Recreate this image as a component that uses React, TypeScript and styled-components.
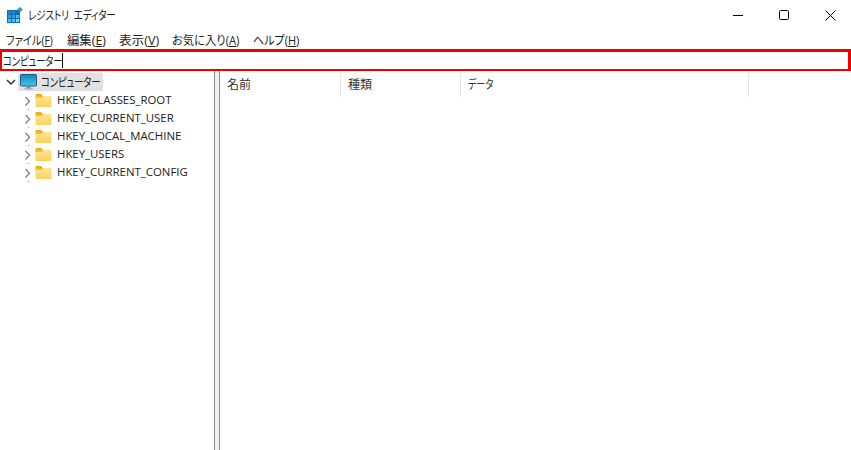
import styled, { createGlobalStyle } from "styled-components";

const GlobalStyle = createGlobalStyle`
  html, body {
    margin: 0;
    padding: 0;
    background: #fff;
  }
`;

const Window = styled.div`
  width: 851px;
  height: 450px;
  overflow: hidden;
  display: flex;
  flex-direction: column;
  background: #fff;
  color: #1a1a1a;
  font-family: "Open Sans", "Noto Sans CJK JP", sans-serif;
  font-size: 12px;
  font-feature-settings: "palt";
`;

// the reference's Japanese UI font has much narrower kana than Noto
const Narrow = styled.span<{ $width: number; $scale: number }>`
  display: inline-block;
  width: ${(p) => p.$width}px;
  white-space: nowrap;
  transform: scaleX(${(p) => p.$scale});
  transform-origin: left center;
`;

const TitleBar = styled.div`
  height: 30px;
  display: flex;
  align-items: center;
  padding-left: 7px;
`;

const TitleText = styled.span`
  margin-left: 5px;
  font-size: 12px;
  color: #222;
  letter-spacing: -0.2px;
  word-spacing: 3px;
`;

const WindowButtons = styled.div`
  margin-left: auto;
  margin-right: -2px;
  display: flex;
`;

const WindowButton = styled.div`
  width: 46px;
  height: 30px;
  display: flex;
  align-items: center;
  justify-content: center;
`;

const MenuBar = styled.div`
  height: 19px;
  display: flex;
  align-items: center;
  gap: 14px;
  padding-left: 6px;
  font-size: 12px;
  color: #222;
`;

const MenuKey = styled.span`
  text-decoration: underline;
`;

const AddressBar = styled.div`
  height: 22px;
  box-sizing: border-box;
  border-style: solid;
  border-color: #f00000;
  border-width: 3px 3px 2px 2px;
  display: flex;
  align-items: center;
  padding-left: 1px;
  font-size: 12px;
  letter-spacing: -0.2px;
`;

const Caret = styled.span`
  width: 1px;
  height: 15px;
  background: #000;
`;

const Panes = styled.div`
  flex: 1;
  display: flex;
  min-height: 0;
`;

const TreePane = styled.div`
  width: 214px;
  flex-shrink: 0;
  padding-top: 2px;
`;

const Splitter = styled.div`
  width: 4px;
  flex-shrink: 0;
  border-left: 1px solid #8c8c8c;
  border-right: 1px solid #8c8c8c;
  background: #f0f0f0;
`;

const TreeRow = styled.div<{ $root?: boolean }>`
  height: 18px;
  display: flex;
  align-items: center;
  padding-left: ${(p) => (p.$root ? 6 : 22)}px;
`;

const Chevron = styled.svg`
  width: 10px;
  height: 10px;
  flex-shrink: 0;
  overflow: visible;
`;

const RootSelection = styled.div`
  display: flex;
  align-items: center;
  height: 18px;
  margin-left: 2px;
  background: #e1e1e1;
  border-radius: 2px;
  padding: 0 3px 0 2px;
`;

const RootLabel = styled.span`
  margin-left: 4px;
  letter-spacing: -0.2px;
  color: #222;
`;

const KeyLabel = styled.span`
  margin-left: 5px;
  padding-bottom: 2px;
  color: #222;
  font-size: 11.4px;
`;

const FolderWrap = styled.svg`
  margin-left: 3px;
  margin-bottom: 1px;
  width: 17px;
  height: 14px;
  flex-shrink: 0;
`;

const ListPane = styled.div`
  flex: 1;
  min-width: 0;
  padding-top: 2px;
`;

const ListHeader = styled.div`
  height: 24px;
  display: flex;
`;

const HeaderCell = styled.div<{ $width: number }>`
  width: ${(p) => p.$width}px;
  display: flex;
  align-items: center;
  padding-left: 7px;
  padding-bottom: 2px;
  box-sizing: border-box;
  border-right: 1px solid #e5e5e5;
  color: #333;
  font-size: 12px;
`;

const keys = [
  "HKEY_CLASSES_ROOT",
  "HKEY_CURRENT_USER",
  "HKEY_LOCAL_MACHINE",
  "HKEY_USERS",
  "HKEY_CURRENT_CONFIG",
];

const menus = [
  { label: "ファイル", key: "F", width: 47, scale: 0.855 },
  { label: "編集", key: "E", width: 38, scale: 1.03 },
  { label: "表示", key: "V", width: 39, scale: 1.05 },
  { label: "お気に入り", key: "A", width: 67, scale: 0.94 },
  { label: "ヘルプ", key: "H", width: 46, scale: 0.92 },
];

function AppIcon() {
  return (
    <svg width="16" height="16" viewBox="0 0 16 16">
      <rect x="0" y="3" width="13" height="13" fill="#0b6fb0" />
      <rect x="1" y="4" width="3" height="3" fill="#1f86c8" />
      <rect x="5" y="4" width="3" height="3" fill="#1f86c8" />
      <rect x="9" y="4" width="3" height="3" fill="#0b6fb0" />
      <rect x="1" y="8" width="3" height="3" fill="#2f9fe0" />
      <rect x="5" y="8" width="3" height="3" fill="#2f9fe0" />
      <rect x="9" y="8" width="3" height="3" fill="#4fbdf2" />
      <rect x="1" y="12" width="3" height="3" fill="#4fbdf2" />
      <rect x="5" y="12" width="3" height="3" fill="#4fbdf2" />
      <rect x="9" y="12" width="3" height="3" fill="#7fd6fa" />
      <path d="M13 0l3 2.5-3 3-3-3z" fill="#2f9ad6" />
    </svg>
  );
}

function FolderIcon() {
  return (
    <FolderWrap viewBox="0 0 17 14">
      <defs>
        <linearGradient id="folderBody" x1="0" y1="0" x2="0" y2="1">
          <stop offset="0" stopColor="#fde693" />
          <stop offset="1" stopColor="#fbd25f" />
        </linearGradient>
      </defs>
      <path d="M0.5 2a1 1 0 0 1 1-1h4.5l2 2h-7.5z" fill="#f0ac14" />
      <path d="M0.5 3h15a1 1 0 0 1 1 1v9a1 1 0 0 1-1 1h-14a1 1 0 0 1-1-1z" fill="url(#folderBody)" />
      <path d="M0.5 3h8l-1.5 2h-6.5z" fill="#f5bd32" />
    </FolderWrap>
  );
}

function MonitorIcon() {
  return (
    <svg width="17" height="16" viewBox="0 0 17 16">
      <defs>
        <linearGradient id="screen" x1="0" y1="0" x2="0" y2="1">
          <stop offset="0" stopColor="#1487b8" />
          <stop offset="1" stopColor="#49c4e6" />
        </linearGradient>
      </defs>
      <rect x="0.5" y="0.5" width="16" height="11.5" rx="1" fill="url(#screen)" stroke="#1b5f86" />
      <rect x="6.5" y="12.5" width="4" height="2" fill="#6f8a99" />
      <rect x="4.5" y="14" width="8" height="1.5" fill="#9db2bd" />
    </svg>
  );
}

export default function App() {
  return (
    <>
      <GlobalStyle />
      <Window>
        <TitleBar>
          <AppIcon />
          <TitleText>
            <Narrow $width={88} $scale={0.8}>
              レジストリ エディター
            </Narrow>
          </TitleText>
          <WindowButtons>
            <WindowButton>
              <svg width="10" height="10" viewBox="0 0 10 10">
                <path d="M0 5.5h10" stroke="#000" strokeWidth="1" />
              </svg>
            </WindowButton>
            <WindowButton>
              <svg width="10" height="10" viewBox="0 0 10 10">
                <rect x="0.5" y="0.5" width="9" height="9" rx="1" fill="none" stroke="#000" />
              </svg>
            </WindowButton>
            <WindowButton>
              <svg width="11" height="11" viewBox="0 0 11 11">
                <path d="M0.5 0.5l10 10M10.5 0.5l-10 10" stroke="#000" strokeWidth="1" />
              </svg>
            </WindowButton>
          </WindowButtons>
        </TitleBar>
        <MenuBar>
          {menus.map((m) => (
            <Narrow key={m.key} $width={m.width} $scale={m.scale}>
              {m.label}(<MenuKey>{m.key}</MenuKey>)
            </Narrow>
          ))}
        </MenuBar>
        <AddressBar>
          <Narrow $width={59} $scale={0.78}>
            コンピューター
          </Narrow>
          <Caret />
        </AddressBar>
        <Panes>
          <TreePane>
            <TreeRow $root>
              <Chevron viewBox="0 0 10 10">
                <path d="M1 3l4 4 4-4" fill="none" stroke="#333" strokeWidth="1.5" />
              </Chevron>
              <RootSelection>
                <MonitorIcon />
                <RootLabel>
                  <Narrow $width={59} $scale={0.78}>
                    コンピューター
                  </Narrow>
                </RootLabel>
              </RootSelection>
            </TreeRow>
            {keys.map((name) => (
              <TreeRow key={name}>
                <Chevron viewBox="0 0 10 10">
                  <path d="M3.5 2l4 4.25-4 4.25" fill="none" stroke="#8a8a8a" strokeWidth="1.5" />
                  <rect x="6" y="14" width="1" height="1" fill="#999" />
                </Chevron>
                <FolderIcon />
                <KeyLabel>{name}</KeyLabel>
              </TreeRow>
            ))}
          </TreePane>
          <Splitter />
          <ListPane>
            <ListHeader>
              <HeaderCell $width={121}>名前</HeaderCell>
              <HeaderCell $width={120}>種類</HeaderCell>
              <HeaderCell $width={288}>
                <Narrow $width={26} $scale={0.75}>
                  データ
                </Narrow>
              </HeaderCell>
            </ListHeader>
          </ListPane>
        </Panes>
      </Window>
    </>
  );
}
